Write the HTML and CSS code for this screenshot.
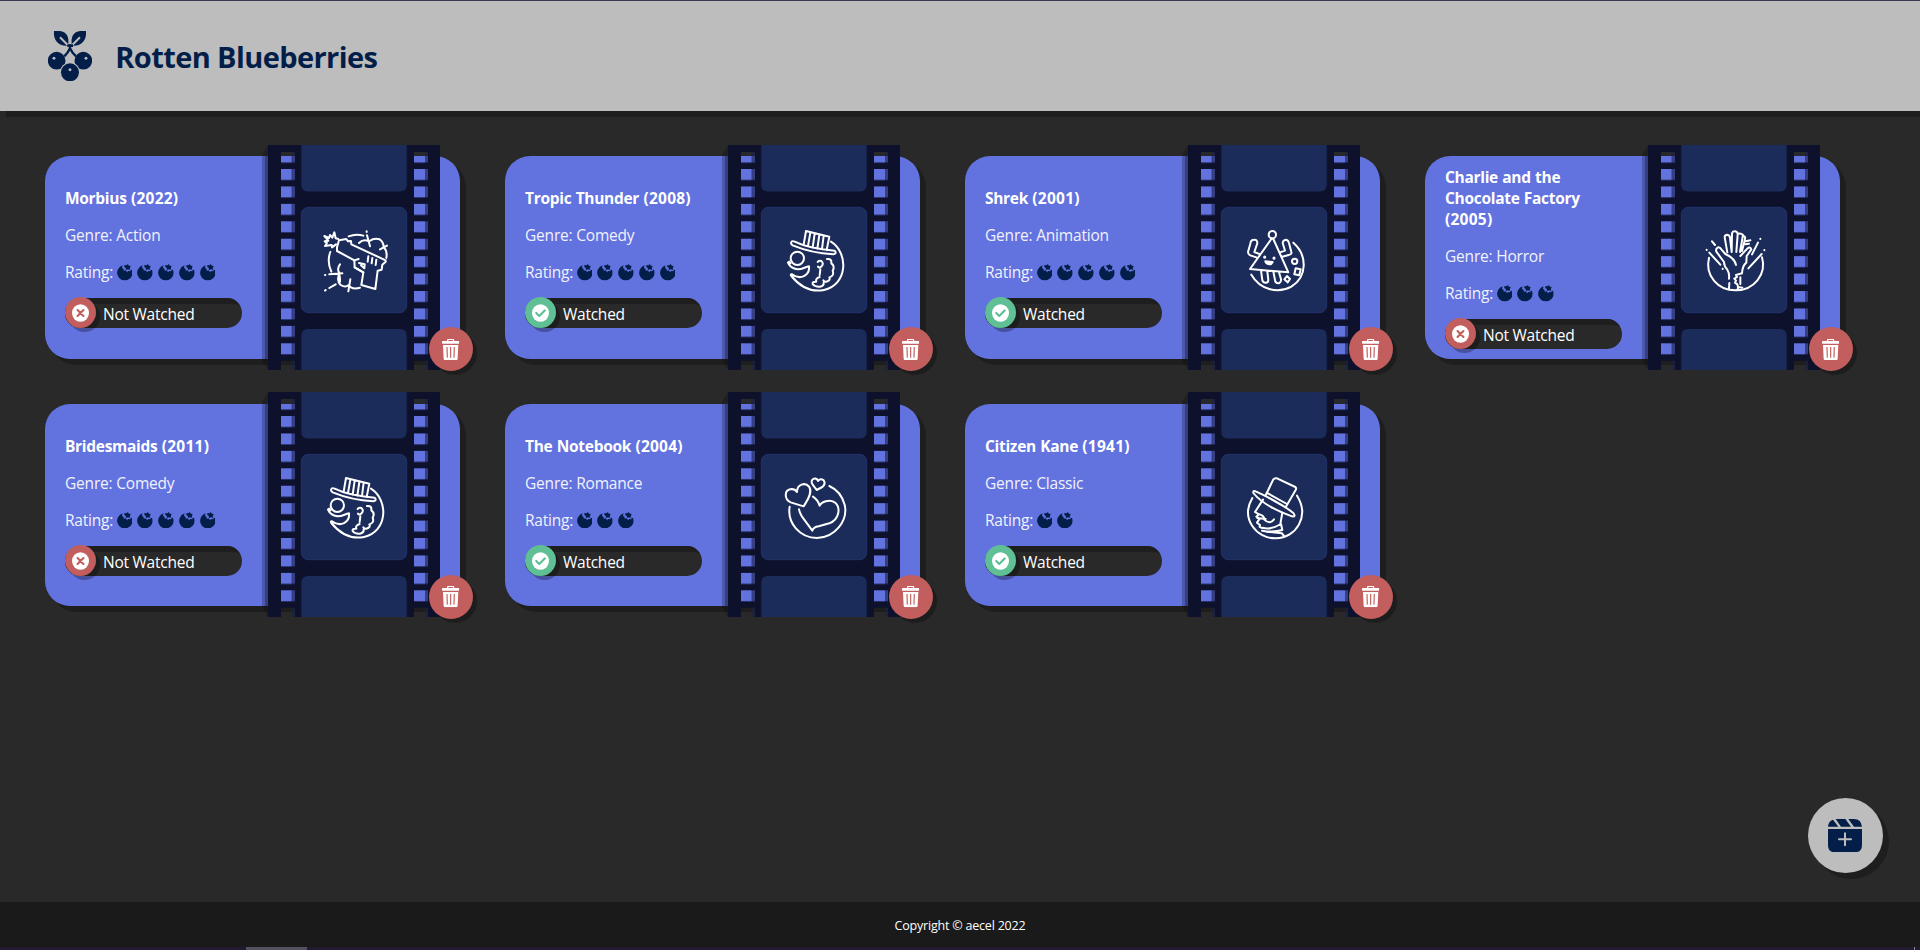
FILE: index.html
```html
<!DOCTYPE html>
<html lang="en">
<head>
<meta charset="utf-8">
<title>Rotten Blueberries</title>
<link rel="stylesheet" href="styles.css">
</head>
<body>
<svg class="defs" aria-hidden="true">
  <defs>
    <pattern id="holes" x="0" y="24" width="172" height="17.43" patternUnits="userSpaceOnUse">
      <rect width="14" height="11" x="13" fill="#000"/>
      <rect width="14" height="11" x="146" fill="#000"/>
    </pattern>
    <mask id="strip">
      <rect width="180" height="240" fill="#fff"/>
      <rect y="7" width="172" height="225" fill="url(#holes)"/>
    </mask>
    <symbol id="film" viewBox="-6 0 178 225">
      <path d="M0 0L-6 10V215L0 225Z" fill="#000" opacity=".22"/>
      <path d="M-3 11H0V214H-3Z" fill="#20295c" opacity=".55"/>
      <path d="M23.500 7H27V225H23.500ZM157 7H160V225H157Z" fill="#1b2148" opacity=".62"/>
      <path d="M13 10H27V11H13ZM146 10H160V11H146Z" fill="#1b2148" opacity=".3"/>
      <rect width="172" height="225" fill="#0d112b" mask="url(#strip)"/>
      <g fill="#1c2c5a" stroke="#263672" stroke-width=".8">
        <path d="M33.300 0H138.700V39.500Q138.700 46.500 131.700 46.500H40.300Q33.300 46.500 33.300 39.500Z" stroke="none"/>
        <rect x="33.300" y="62.300" width="105.400" height="105.400" rx="7"/>
        <path d="M33.300 225V191Q33.300 184 40.300 184H131.700Q138.700 184 138.700 191V225Z" stroke="none"/>
      </g>
    </symbol>
    <symbol id="berry" viewBox="0 0 48 50">
      <path d="M17 4A23.500 23.500 0 1 0 46 18L41 17 41 22 34 21 31 25 27 20 20 20 20 15 15 11Z" fill="#031e48"/>
      <path d="M23 3L29 4 33 0 36 5 42 6 39 11 40 17 33 16 27 18 27 12 22 9Z" fill="#031e48"/>
    </symbol>
    <symbol id="cross" viewBox="0 0 52 54">
      <ellipse cx="26" cy="27" rx="26" ry="27" fill="#fff"/>
      <path d="M17 18L35 36M35 18L17 36" stroke="#c25e5e" stroke-width="6.500" stroke-linecap="round"/>
    </symbol>
    <symbol id="check" viewBox="0 0 52 54">
      <ellipse cx="26" cy="27" rx="26" ry="27" fill="#fff"/>
      <path d="M13 27L22 36 39 19" fill="none" stroke="#5fbf95" stroke-width="6.500" stroke-linecap="round" stroke-linejoin="round"/>
    </symbol>
    <symbol id="trash" viewBox="0 0 52 64">
      <path d="M17 8V4Q17 1 20 1H32Q35 1 35 4V8" fill="none" stroke="#fff" stroke-width="3.500"/>
      <rect y="6" width="52" height="8" rx="2" fill="#fff"/>
      <path d="M3 18H49L47 59Q46.500 64 42 64H10Q5.500 64 5 59Z" fill="#fff"/>
      <path d="M15 24L16 56M26 24V56M37 24L36 56" stroke="#c25e5e" stroke-width="3.500"/>
    </symbol>
    <symbol id="action" viewBox="0 0 330 330">
      <path d="M73 78L87 84 90 75 97 83 103 67 107 85 115 87M73 78L85 92 74 94 81 99 75 108 95 105 96 112 108 103"/>
      <path d="M117 91L139 87 144 94 153 93 154 103 257 151 257 155 247 164 245 179 233 182 226 237 184 225 190 187 164 172 163 151 111 123 111 112Z"/>
      <path d="M163 151L176 147M164 172L190 187M177 159L194 163 193 175 183 166M205 139L203 155M217 144L215 160M229 149L227 165"/>
      <path d="M146 79Q168 70 190 77M200 64V66M201 76L210 109M177 99Q189 87 205 93M209 93Q222 83 239 88 251 96 251 112 263 123 259 144M240 118L261 107"/>
      <path d="M91 126Q80 154 94 185M75 195H76M88 193L127 190M120 163Q109 177 119 190 108 211 122 225 137 234 146 225 155 240 180 233M117 191Q121 202 120 215M151 208L145 244M75 242L77 240M88 234L107 223"/>
    </symbol>
    <symbol id="comedy" viewBox="0 0 330 330">
      <path d="M95 95Q90 101 98 106 154 129 220 133 232 130 224 122 146 116 104 95 97 92 95 95ZM131 104L138 63 208 80 200 120M151 68L144 108M164 71L158 113M178 75L172 116M191 77L186 117"/>
      <path d="M213 95C267 129 263 225 192 240 151 248 120 230 94 198Q90 192 96 193C121 211 150 197 147 169 135 170 128 179 112 178Q91 175 84 158L88 155L91 160"/>
      <circle cx="112" cy="145" r="20"/>
      <path d="M173 156Q176 150 184 153 193 161 184 170 177 175 174 170M181 178L179 195M201 147Q216 145 214 160 226 169 218 182 224 197 208 202 213 211 199 215 193 216 190 211M179 201Q165 206 169 215 156 214 158 222 164 231 180 230 193 227 191 217"/>
    </symbol>
    <symbol id="animation" viewBox="0 0 330 330">
      <circle cx="157" cy="74" r="11"/>
      <path d="M154 87L90 177 205 187 160 87M121 133L103 126 112 100Q112 88 102 89 92 89 91 101L84 126Q84 133 91 136L109 142M180 127L195 122 188 99Q189 90 198 89 205 90 207 99L214 126Q216 133 206 135L184 141M123 181L127 211Q130 219 138 218 145 218 145 210L142 184M160 185L166 215Q170 221 178 219 184 216 183 208L177 187"/>
      <path d="M134 141V142M162 144V145" stroke-width="9"/>
      <path d="M136 154L158 156Q154 164 147 163 138 162 136 154Z" fill="#fff"/>
      <path d="M220 98C263 136 262 201 214 230 172 253 120 238 94 194"/>
      <circle cx="224" cy="154" r="8"/>
      <path d="M227 175L242 178 238 196 223 193ZM201 198L210 207 203 217 193 208Z"/>
    </symbol>
    <symbol id="horror" viewBox="0 0 330 330">
      <path d="M87 143C74 197 114 242 168 241 222 240 261 193 246 142"/>
      <path d="M147 236L148 219M147 206Q149 190 142 179 132 169 132 156L109 125Q106 116 114 112 120 111 124 118L136 132Q164 144 168 165M142 127L134 82Q134 74 142 74 149 75 150 83L155 126M155 126L156 70Q158 63 165 64 173 65 173 73L169 126M173 72Q182 68 189 75L180 126M189 77Q197 79 195 87L186 123M181 138L202 116Q210 108 214 118L200 138 199 158Q187 167 186 190M186 190L168 195 171 201 163 206 168 212 165 218 172 223 174 231 187 233M174 232L173 239M181 202V222M197 94L211 91M196 103L207 101"/>
      <path d="M80 119V120M88 128L121 164M128 176V177M96 94L105 105M241 86V87M234 98L216 133M253 120V121M245 132L205 175"/>
    </symbol>
    <symbol id="romance" viewBox="0 0 330 330">
      <path d="M131 154L92 142C72 132 72 104 94 102 104 102 108 106 111 111 111 88 135 80 148 96 159 115 139 140 131 154Z"/>
      <path d="M170 105L158 89Q150 76 162 71 171 69 174 78 181 68 191 76 198 87 187 96Z"/>
      <path d="M117 163Q118 171 126 185L157 227Q160 216 176 214L208 205C237 195 244 158 224 142 208 131 184 141 179 152Q174 135 159 125M89 155C81 204 119 248 171 249 225 247 265 197 254 149 246 121 228 102 208 93"/>
    </symbol>
    <symbol id="classic" viewBox="0 0 330 330">
      <path d="M136 123L160 73Q164 68 171 70L226 96Q230 100 227 105L197 157M136 123L197 157M140 113L201 147M107 109Q99 105 100 114 132 154 216 184 229 186 220 174 180 142 107 109Z"/>
      <path d="M97 129C61 190 109 252 168 250 228 249 270 184 231 122M129 134L105 171 117 178 109 185 119 191 111 203 120 210Q115 219 132 220M119 178Q134 183 133 194 149 210 162 193M112 189L137 192M187 173L181 207M128 218Q151 226 183 207L187 225Q160 233 126 227M139 230L186 235 191 242"/>
    </symbol>
  </defs>
</svg>

<header class="header">
  <svg class="logo" viewBox="144 92 133 151" fill="#031e48">
    <path d="M162 92H179C200 94 209 110 204 136 178 139 159 122 162 92Z"/>
    <path d="M258 92H241C220 94 211 110 216 136 242 139 261 122 258 92Z"/>
    <path d="M180 111L203 134M240 111L217 134" stroke="#bdbdbd" stroke-width="6"/>
    <path d="M210 132V146M210 144Q205 156 193 168M210 144Q215 156 228 168" fill="none" stroke="#031e48" stroke-width="7"/>
    <path d="M202 132H219V140H202Z"/>
    <circle cx="170" cy="181" r="26.500"/><circle cx="250" cy="181" r="26.500"/>
    <circle cx="210" cy="216" r="30" fill="#bdbdbd"/><circle cx="210" cy="216" r="27"/>
    <g fill="#bdbdbd"><circle cx="162" cy="174" r="4.500"/><circle cx="258" cy="174" r="4.500"/><circle cx="210" cy="208" r="4.500"/></g>
  </svg>
  <h1 class="brand">Rotten Blueberries</h1>
</header>

<main class="movies">
  <article class="card">
    <div class="info">
      <h2 class="title">Morbius <span class="year">(2022)</span></h2>
      <p class="line">Genre: Action</p>
      <p class="line rating"><span class="label">Rating:</span><svg class="berry"><use href="#berry"/></svg><svg class="berry"><use href="#berry"/></svg><svg class="berry"><use href="#berry"/></svg><svg class="berry"><use href="#berry"/></svg><svg class="berry"><use href="#berry"/></svg></p>
      <div class="status"><span class="knob no"><svg class="mark"><use href="#cross"/></svg></span><span>Not Watched</span></div>
    </div>
    <div class="reel"><svg class="film"><use href="#film"/></svg><svg class="genre"><use href="#action"/></svg></div>
    <button class="delete" aria-label="Delete"><svg class="bin"><use href="#trash"/></svg></button>
  </article>
  <article class="card">
    <div class="info">
      <h2 class="title">Tropic Thunder <span class="year">(2008)</span></h2>
      <p class="line">Genre: Comedy</p>
      <p class="line rating"><span class="label">Rating:</span><svg class="berry"><use href="#berry"/></svg><svg class="berry"><use href="#berry"/></svg><svg class="berry"><use href="#berry"/></svg><svg class="berry"><use href="#berry"/></svg><svg class="berry"><use href="#berry"/></svg></p>
      <div class="status"><span class="knob yes"><svg class="mark"><use href="#check"/></svg></span><span>Watched</span></div>
    </div>
    <div class="reel"><svg class="film"><use href="#film"/></svg><svg class="genre"><use href="#comedy"/></svg></div>
    <button class="delete" aria-label="Delete"><svg class="bin"><use href="#trash"/></svg></button>
  </article>
  <article class="card">
    <div class="info">
      <h2 class="title">Shrek <span class="year">(2001)</span></h2>
      <p class="line">Genre: Animation</p>
      <p class="line rating"><span class="label">Rating:</span><svg class="berry"><use href="#berry"/></svg><svg class="berry"><use href="#berry"/></svg><svg class="berry"><use href="#berry"/></svg><svg class="berry"><use href="#berry"/></svg><svg class="berry"><use href="#berry"/></svg></p>
      <div class="status"><span class="knob yes"><svg class="mark"><use href="#check"/></svg></span><span>Watched</span></div>
    </div>
    <div class="reel"><svg class="film"><use href="#film"/></svg><svg class="genre"><use href="#animation"/></svg></div>
    <button class="delete" aria-label="Delete"><svg class="bin"><use href="#trash"/></svg></button>
  </article>
  <article class="card">
    <div class="info">
      <h2 class="title">Charlie and the Chocolate Factory <span class="year">(2005)</span></h2>
      <p class="line">Genre: Horror</p>
      <p class="line rating"><span class="label">Rating:</span><svg class="berry"><use href="#berry"/></svg><svg class="berry"><use href="#berry"/></svg><svg class="berry"><use href="#berry"/></svg></p>
      <div class="status"><span class="knob no"><svg class="mark"><use href="#cross"/></svg></span><span>Not Watched</span></div>
    </div>
    <div class="reel"><svg class="film"><use href="#film"/></svg><svg class="genre"><use href="#horror"/></svg></div>
    <button class="delete" aria-label="Delete"><svg class="bin"><use href="#trash"/></svg></button>
  </article>
  <article class="card">
    <div class="info">
      <h2 class="title">Bridesmaids <span class="year">(2011)</span></h2>
      <p class="line">Genre: Comedy</p>
      <p class="line rating"><span class="label">Rating:</span><svg class="berry"><use href="#berry"/></svg><svg class="berry"><use href="#berry"/></svg><svg class="berry"><use href="#berry"/></svg><svg class="berry"><use href="#berry"/></svg><svg class="berry"><use href="#berry"/></svg></p>
      <div class="status"><span class="knob no"><svg class="mark"><use href="#cross"/></svg></span><span>Not Watched</span></div>
    </div>
    <div class="reel"><svg class="film"><use href="#film"/></svg><svg class="genre"><use href="#comedy"/></svg></div>
    <button class="delete" aria-label="Delete"><svg class="bin"><use href="#trash"/></svg></button>
  </article>
  <article class="card">
    <div class="info">
      <h2 class="title">The Notebook <span class="year">(2004)</span></h2>
      <p class="line">Genre: Romance</p>
      <p class="line rating"><span class="label">Rating:</span><svg class="berry"><use href="#berry"/></svg><svg class="berry"><use href="#berry"/></svg><svg class="berry"><use href="#berry"/></svg></p>
      <div class="status"><span class="knob yes"><svg class="mark"><use href="#check"/></svg></span><span>Watched</span></div>
    </div>
    <div class="reel"><svg class="film"><use href="#film"/></svg><svg class="genre lower"><use href="#romance"/></svg></div>
    <button class="delete" aria-label="Delete"><svg class="bin"><use href="#trash"/></svg></button>
  </article>
  <article class="card">
    <div class="info">
      <h2 class="title">Citizen Kane <span class="year">(1941)</span></h2>
      <p class="line">Genre: Classic</p>
      <p class="line rating"><span class="label">Rating:</span><svg class="berry"><use href="#berry"/></svg><svg class="berry"><use href="#berry"/></svg></p>
      <div class="status"><span class="knob yes"><svg class="mark"><use href="#check"/></svg></span><span>Watched</span></div>
    </div>
    <div class="reel"><svg class="film"><use href="#film"/></svg><svg class="genre lower"><use href="#classic"/></svg></div>
    <button class="delete" aria-label="Delete"><svg class="bin"><use href="#trash"/></svg></button>
  </article>
</main>

<button class="add" aria-label="Add movie">
  <svg class="clapper" viewBox="0 0 102 100">
    <path d="M0 30H102V78Q102 100 80 100H22Q0 100 0 78Z" fill="#031e48"/>
    <path d="M0 23Q1 7 15 2L31 23ZM23 0H52L69 23H39ZM61 0H78Q100 1 102 23H78Z" fill="#031e48"/>
    <path d="M51 43V79M33 61H69" stroke="#bdbdbd" stroke-width="6" stroke-linecap="round"/>
  </svg>
</button>

<footer class="footer">Copyright © aecel 2022</footer>
<div class="edge"><span class="thumb"></span><span class="tick"></span></div>
</body>
</html>
```

FILE: styles.css
```css
* { box-sizing: border-box; }

body {
  margin: 0;
  height: 950px;
  display: flex;
  flex-direction: column;
  overflow: hidden;
  background: #292929;
  color: #fff;
  font: 15.5px/21px "Open Sans", "Noto Sans", sans-serif;
}

svg { display: block; flex: none; }
.defs { position: absolute; width: 0; height: 0; }

.header {
  flex: none;
  height: 111px;
  padding-left: 48px;
  display: flex;
  align-items: center;
  gap: 23px;
  background: #bdbdbd;
  border-top: 1px solid #39384f;
  box-shadow: 6px 6px 0 #1e1e1e;
}
.logo { width: 44.3px; height: 50.3px; }
.brand {
  margin: 0;
  padding-top: 2px;
  color: #031e48;
  font-size: 29px;
  line-height: 40px;
  font-weight: 700;
  letter-spacing: -.6px;
}

.movies {
  flex: 1;
  padding: 45px 45px 0;
  display: grid;
  grid-template-columns: repeat(4, 415px);
  grid-auto-rows: 202.67px;
  align-content: start;
  gap: 45px;
}

.card {
  position: relative;
  display: flex;
  align-items: center;
  padding-left: 20px;
  background: #6272de;
  border-radius: 25px;
  box-shadow: 6px 6px 0 #1e1e1e;
}
.info {
  width: 177px;
  flex: none;
  padding-top: 1.2px;
  display: flex;
  flex-direction: column;
  gap: 16px;
}
.title {
  margin: 0;
  font-size: 15.5px;
  line-height: 21px;
  font-weight: 700;
  letter-spacing: -.3px;
  word-spacing: .6px;
}
.year { letter-spacing: .25px; }
.line { margin: 0; color: #f1f2fc; letter-spacing: -.2px; }
.rating { display: flex; align-items: center; gap: 5px; }
.label { width: 46.5px; white-space: nowrap; }
.berry { width: 15.75px; height: 16.5px; }

.status {
  height: 30px;
  display: flex;
  align-items: center;
  gap: 7px;
  border-radius: 15px;
  background: #292929;
  box-shadow: inset 6px 6px 0 #1e1e1e;
  letter-spacing: -.25px;
  margin-top: -1px;
  line-height: 32px;
}
.status > span:last-child { padding-top: 2px; }
.knob {
  width: 31px;
  height: 31px;
  display: grid;
  place-items: center;
  border-radius: 50%;
  box-shadow: 4px 4px 0 rgba(0, 0, 0, .28);
}
.no { background: #c25e5e; }
.yes { background: #5fbf95; }
.mark { width: 17px; height: 18px; }

.reel {
  display: grid;
  margin-left: 20px;
  margin-bottom: .2px;
}
.film { grid-area: 1 / 1; width: 178px; height: 225px; }
.genre {
  grid-area: 1 / 1;
  width: 110px;
  height: 110px;
  margin: 65px 0 0 38px;
  fill: none;
  stroke: #fff;
  stroke-width: 6px;
  stroke-linecap: round;
  stroke-linejoin: round;
}
.lower { margin-top: 63px; }

.delete {
  position: absolute;
  right: -13px;
  bottom: -12.3px;
  width: 44px;
  height: 44px;
  padding: 1px 0 0;
  display: grid;
  place-items: center;
  border: 0;
  border-radius: 50%;
  background: #c25e5e;
  box-shadow: 4px 4px 0 rgba(0, 0, 0, .28);
}
.bin { width: 17.3px; height: 21.3px; }

.add {
  position: absolute;
  right: 37px;
  bottom: 77px;
  width: 75px;
  height: 75px;
  padding: 0 1px 0 0;
  display: grid;
  place-items: center;
  border: 0;
  border-radius: 50%;
  background: #bdbdbd;
  box-shadow: 6px 6px 0 #1e1e1e;
}
.clapper { width: 34px; height: 33.3px; }

.footer {
  flex: none;
  height: 45px;
  background: #1a1a1a;
  text-align: center;
  font-size: 12.5px;
  line-height: 48px;
  letter-spacing: -.2px;
}
.edge {
  flex: none;
  height: 3px;
  padding: 0 5px 0 246px;
  display: flex;
  justify-content: space-between;
  background: #211a30;
}
.thumb { width: 61px; background: #54515f; }
.tick { width: 1px; background: #8a8890; }
```
